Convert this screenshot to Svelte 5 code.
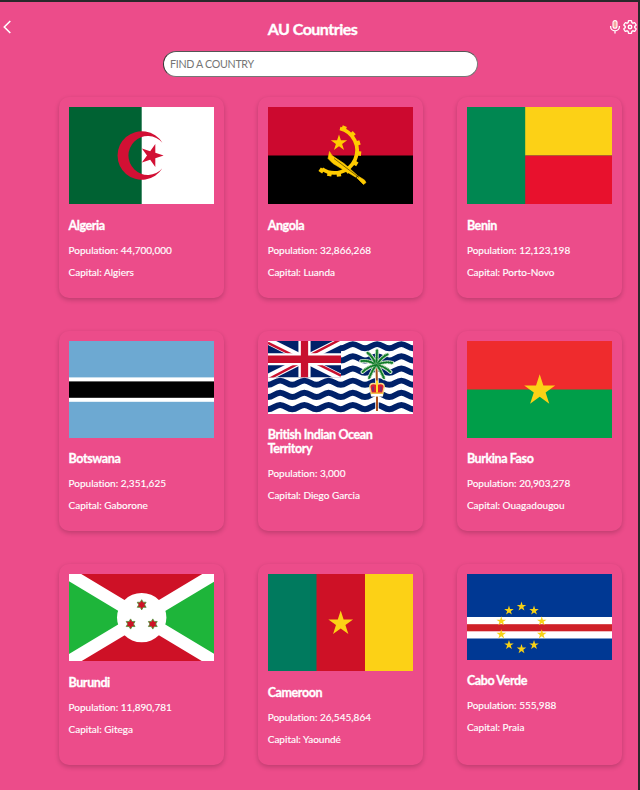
<script>
  const countries = [
    { name: 'Algeria', population: '44,700,000', capital: 'Algiers', flag: 'dz', h: 97 },
    { name: 'Angola', population: '32,866,268', capital: 'Luanda', flag: 'ao', h: 97 },
    { name: 'Benin', population: '12,123,198', capital: 'Porto-Novo', flag: 'bj', h: 97 },
    { name: 'Botswana', population: '2,351,625', capital: 'Gaborone', flag: 'bw', h: 97 },
    { name: 'British Indian Ocean Territory', population: '3,000', capital: 'Diego Garcia', flag: 'io', h: 73 },
    { name: 'Burkina Faso', population: '20,903,278', capital: 'Ouagadougou', flag: 'bf', h: 97 },
    { name: 'Burundi', population: '11,890,781', capital: 'Gitega', flag: 'bi', h: 87.3 },
    { name: 'Cameroon', population: '26,545,864', capital: 'Yaoundé', flag: 'cm', h: 97 },
    { name: 'Cabo Verde', population: '555,988', capital: 'Praia', flag: 'cv', h: 85.7 }
  ];

  // Points of a star with n tips; k is the inner/outer radius ratio.
  function star(cx, cy, r, turn = -90, n = 5, k = 0.382) {
    let pts = [];
    for (let i = 0; i < n * 2; i++) {
      const a = ((turn + (i * 180) / n) * Math.PI) / 180;
      const d = i % 2 ? r * k : r;
      pts.push(`${(cx + d * Math.cos(a)).toFixed(2)},${(cy + d * Math.sin(a)).toFixed(2)}`);
    }
    return pts.join(' ');
  }

  function wave(y) {
    let d = `M0 ${y + 2}`;
    for (let i = 0; i < 6; i++) {
      const x = i * 24.25;
      d += `C${x + 5} ${y + 2} ${x + 7} ${y - 2.2} ${x + 12.1} ${y - 2.2}S${x + 19.2} ${y + 2} ${x + 24.25} ${y + 2}`;
    }
    return d;
  }

  const waves = [5.3, 17.5, 29.7, 41.8, 54, 66.2, 78.4].map(wave);
  const fronds = [-165, -125, -88, -45, -8, 28, 62, 118, 152].map((a) => {
    const t = (a * Math.PI) / 180;
    return `M108.5 24Q${108.5 + 8 * Math.cos(t)} ${21 + 8 * Math.sin(t)} ${108.5 + 16 * Math.cos(t)} ${24 + 15 * Math.sin(t)}`;
  });
  const teeth = [-68, -43, -18, 7, 32, 57, 81, 103, 124].map((a) => {
    const t = (a * Math.PI) / 180;
    return `M${67 + 22 * Math.cos(t)} ${43.5 + 22 * Math.sin(t)}L${67 + 26.3 * Math.cos(t)} ${43.5 + 26.3 * Math.sin(t)}`;
  });
  const ring = Array.from({ length: 10 }, (_, i) => {
    const a = ((i * 36 - 90) * Math.PI) / 180;
    return star(54.5 + 21.3 * Math.cos(a), 53.8 + 21.3 * Math.sin(a), 5);
  });
</script>

<div class="page">
  <header>
    <svg class="back" viewBox="0 0 10 16"><path d="M8.3 2 2.3 8l6 6" fill="none" stroke="#fff" stroke-width="1.6" /></svg>
    <h1>AU Countries</h1>
    <div class="tools">
      <svg class="mic" viewBox="0 0 12 16">
        <rect x="4" y="1.6" width="4" height="7.6" rx="2" fill="#f5a99f" stroke="#fff" stroke-width="1.1" />
        <path d="M1.6 7v.5a4.4 4.4 0 0 0 8.8 0V7M6 12v2.6" fill="none" stroke="#fff" stroke-width="1.3" />
      </svg>
      <svg class="gear" viewBox="1 1 22 22">
        <path d="M19.43 12.98c.04-.32.07-.64.07-.98s-.03-.66-.07-.98l2.11-1.65c.19-.15.24-.42.12-.64l-2-3.46c-.12-.22-.39-.3-.61-.22l-2.49 1c-.52-.4-1.08-.73-1.69-.98l-.38-2.65C14.46 2.18 14.25 2 14 2h-4c-.25 0-.46.18-.49.42l-.38 2.65c-.61.25-1.17.59-1.69.98l-2.49-1c-.23-.09-.49 0-.61.22l-2 3.46c-.13.22-.07.49.12.64l2.11 1.65c-.04.32-.07.65-.07.98s.03.66.07.98l-2.11 1.65c-.19.15-.24.42-.12.64l2 3.46c.12.22.39.3.61.22l2.49-1c.52.4 1.08.73 1.69.98l.38 2.65c.03.24.24.42.49.42h4c.25 0 .46-.18.49-.42l.38-2.65c.61-.25 1.17-.59 1.69-.98l2.49 1c.23.09.49 0 .61-.22l2-3.46c.12-.22.07-.49-.12-.64z" fill="#ec4c8a" stroke="#fff" stroke-width="2" />
        <circle cx="12" cy="12" r="2.8" fill="none" stroke="#fff" stroke-width="2.2" />
      </svg>
    </div>
  </header>

  <input type="text" placeholder="FIND A COUNTRY" />

  <main>
    {#each countries as c}
      <article>
        <svg class="flag" viewBox="0 0 145.5 {c.h}" preserveAspectRatio="none" style="height: {c.h}px">
          {#if c.flag === 'dz'}
            <rect width="145.5" height="97" fill="#fff" />
            <rect width="72.7" height="97" fill="#006233" />
            <path d="M93.4 35.7A24.25 24.25 0 1 0 93.4 61.3A19.4 19.4 0 1 1 93.4 35.7z" fill="#d21034" />
            <polygon points={star(82.6, 48.5, 12, 0)} fill="#d21034" />
          {:else if c.flag === 'ao'}
            <rect width="145.5" height="97" />
            <rect width="145.5" height="48.5" fill="#cc092f" />
            <g fill="none" stroke="#ffcb00">
              <path d="M72 21.5A22.5 22.5 0 1 1 54 62" stroke-width="3.8" />
              {#each teeth as d}<path {d} stroke-width="4.4" />{/each}
            </g>
            <polygon points={star(71, 36, 8.6)} fill="#ffcb00" />
            <path d="M61.5 44.5 60 51.5 65 56.5 89 71 95.5 77.5 98 75.5 96.5 73 90 69 76 56.5 64 48.5z" fill="#ffcb00" stroke="#ffcb00" stroke-width=".6" />
            <path d="M66 51.5 91 70.5" stroke="#000" stroke-width=".5" />
            <path d="M87.5 71.3 90 68.5" stroke="#000" stroke-width=".8" />
          {:else if c.flag === 'bj'}
            <rect width="145.5" height="97" fill="#008751" />
            <rect x="58.2" width="87.3" height="48.5" fill="#fcd116" />
            <rect x="58.2" y="48.5" width="87.3" height="48.5" fill="#e8112d" />
          {:else if c.flag === 'bw'}
            <rect width="145.5" height="97" fill="#6da9d2" />
            <rect y="36.4" width="145.5" height="24.4" fill="#fff" />
            <rect y="40.4" width="145.5" height="16.4" />
          {:else if c.flag === 'io'}
            <rect width="145.5" height="73" fill="#fff" />
            <g fill="none" stroke="#002169" stroke-width="5.9">
              {#each waves as d}<path {d} />{/each}
            </g>
            <svg width="73" height="36.5" viewBox="0 0 60 30" preserveAspectRatio="none">
              <rect width="60" height="30" fill="#002169" />
              <path d="M0 0 60 30M60 0 0 30" stroke="#fff" stroke-width="6" />
              <path d="M0 1.5 26 14.5M34 15.5 60 28.5M59 -1 34 12M26 18 1 31" stroke="#c8102e" stroke-width="2" />
              <path d="M30 0v30M0 15h60" stroke="#fff" stroke-width="10" />
              <path d="M30 0v30M0 15h60" stroke="#c8102e" stroke-width="6" />
            </svg>
            <path d="M108.5 24 109 44V70" fill="none" stroke="#fff" stroke-width="3.5" />
            <path d="M108.5 26 109 44V70" fill="none" stroke="#a94e1b" stroke-width="2" />
            <g fill="none" stroke-linecap="round">
              {#each fronds as d}<path {d} stroke="#e3efdf" stroke-width="3.8" />{/each}
              {#each fronds as d}<path {d} stroke="#6aa870" stroke-width="3.2" stroke-dasharray="1 .7" stroke-linecap="butt" /><path {d} stroke="#0c7a26" stroke-width="1.7" />{/each}
            </g>
            <path d="M101.8 46q0-3.5 3.5-3.5 2 0 3.7 1 1.7-1 3.7-1 3.5 0 3.5 3.5l-1.8 8.5h-10.8z" fill="#e0202c" stroke="#f6dc8a" stroke-width="1.4" />
            <path d="M105 45.5v5M113 45.5v5" stroke="#3b3a9a" stroke-width="1.1" />
            <path d="M109 39.5v12" stroke="#ffdf28" stroke-width="2" />
            <path d="M102.8 52.2h12.4" stroke="#f5c93c" stroke-width="1.4" />
            <path d="M103.2 54.2h11.6" stroke="#fff" stroke-width="2.6" />
          {:else if c.flag === 'bf'}
            <rect width="145.5" height="97" fill="#009e49" />
            <rect width="145.5" height="48.5" fill="#ef2b2d" />
            <polygon points={star(72.7, 49.5, 16.3)} fill="#fcd116" />
          {:else if c.flag === 'bi'}
            <rect width="145.5" height="87.3" fill="#ce1126" />
            <path d="M0 0 72.7 43.6 0 87.3zM145.5 0 72.7 43.6 145.5 87.3z" fill="#1eb53a" />
            <path d="M0 0 145.5 87.3M145.5 0 0 87.3" stroke="#fff" stroke-width="12.6" />
            <circle cx="72.7" cy="43.6" r="24.7" fill="#fff" />
            {#each [[72.7, 30.8], [61.6, 50], [83.8, 50]] as [x, y]}
              <polygon points={star(x, y, 5.1, -90, 6, 0.577)} fill="#ce1126" stroke="#4d9237" stroke-width=".8" />
            {/each}
          {:else if c.flag === 'cm'}
            <rect width="145.5" height="97" fill="#ce1126" />
            <rect width="48.5" height="97" fill="#007a5e" />
            <rect x="97" width="48.5" height="97" fill="#fcd116" />
            <polygon points={star(72.7, 49.5, 13)} fill="#fcd116" />
          {:else}
            <rect width="145.5" height="86" fill="#003893" />
            <rect y="43" width="145.5" height="21.5" fill="#fff" />
            <rect y="50.2" width="145.5" height="7.1" fill="#cf2027" />
            {#each ring as points}<polygon {points} fill="#f7d116" />{/each}
          {/if}
        </svg>
        <h2>{c.name}</h2>
        <p>Population: {c.population}</p>
        <p>Capital: {c.capital}</p>
      </article>
    {/each}
  </main>
</div>

<style>
  :global(body) {
    background: #ec4c8a;
  }

  .page {
    box-sizing: border-box;
    height: 790px;
    overflow: hidden;
    border-top: 2px solid #28282a;
    border-right: 2px solid #28282a;
    background: #ec4c8a;
    color: #fff;
    font-family: Lato, sans-serif;
    display: flex;
    flex-direction: column;
  }

  header {
    display: flex;
    align-items: flex-start;
    justify-content: space-between;
    height: 49px;
    padding: 17px 1px 0 2px;
    box-sizing: border-box;
  }

  .back {
    width: 10px;
    height: 16px;
    margin-right: 4px;
  }

  h1 {
    margin: 0;
    font-size: 16px;
    line-height: 20px;
    font-weight: 700;
    letter-spacing: -0.52px;
    -webkit-text-stroke: 0.35px #fff;
  }

  .tools {
    display: flex;
    gap: 2px;
  }

  .mic {
    width: 12px;
    height: 16px;
  }

  .gear {
    width: 14px;
    height: 14px;
    margin-top: 1px;
  }

  input {
    box-sizing: border-box;
    flex: none;
    width: 315px;
    height: 26px;
    margin: 0 0 0 163px;
    padding: 0 6px 2px;
    border: 1px solid #767676;
    border-top-color: #555;
    border-left-color: #333;
    border-radius: 13px;
    background: #fff;
    font: 10.67px Lato, sans-serif;
    letter-spacing: -0.3px;
  }

  input::placeholder {
    color: #757575;
    opacity: 1;
  }

  main {
    display: grid;
    grid-template-columns: repeat(3, 165.5px);
    grid-auto-rows: 200.7px;
    gap: 32.6px 33.7px;
    padding: 20.4px 0 0 58.5px;
  }

  article {
    box-sizing: border-box;
    padding: 10px;
    border-radius: 10px;
    box-shadow: 0 2px 5px rgba(0, 0, 0, 0.2);
  }

  .flag {
    display: block;
    width: 145.5px;
  }

  h2 {
    margin: 14.7px 0 0;
    font-size: 12.5px;
    line-height: 14px;
    font-weight: 700;
    letter-spacing: -0.4px;
    -webkit-text-stroke: 0.3px #fff;
  }

  p {
    margin: 11px 0 0;
    font-size: 10px;
    line-height: 12px;
    letter-spacing: 0.01px;
    -webkit-text-stroke: 0.15px #fff;
  }

  p + p {
    margin-top: 10px;
  }
</style>
